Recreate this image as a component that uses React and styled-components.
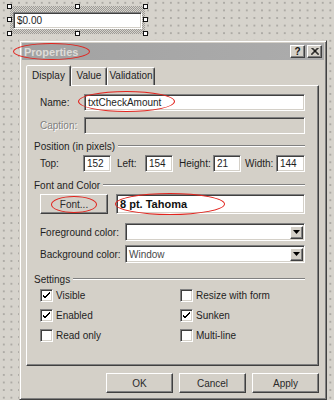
import React from 'react'
import styled, { createGlobalStyle, css } from 'styled-components'

const GlobalStyle = createGlobalStyle`
  html, body {
    margin: 0;
    padding: 0;
  }
  body {
    font-family: "Liberation Sans", Arial, sans-serif;
    font-size: 10px;
    color: #1e1e1e;
  }
  * {
    box-sizing: border-box;
  }
`

const sunken = css`
  border: 1px solid;
  border-color: #808080 #ffffff #ffffff #808080;
  box-shadow: inset 1px 1px 0 #404040, inset -1px -1px 0 #d4d0c8;
`
const raised = css`
  border: 1px solid;
  border-color: #ffffff #404040 #404040 #ffffff;
  box-shadow: inset -1px -1px 0 #808080;
  background: #d4d0c8;
`

const Canvas = styled.div`
  width: 334px;
  height: 400px;
  overflow: hidden;
  padding-top: 6px;
  background-color: #d6d3cc;
  background-image: radial-gradient(circle, #8e8c88 0.5px, transparent 0.9px);
  background-size: 7.6px 7.6px;
  background-position: 0 -1px;
`

// selected control on the form designer
const Selection = styled.div`
  position: relative;
  margin-left: 10px;
  width: 135px;
  height: 28px;
  padding: 6px 3px 5px 3px;
  background: repeating-conic-gradient(#9c9a96 0 25%, #d6d3cc 0 50%) 0 0 / 2px 2px;
`
const Handle = styled.span`
  position: absolute;
  left: ${(p) => p.$x}px;
  top: ${(p) => p.$y}px;
  width: 5px;
  height: 5px;
  background: #fff;
  border: 1px solid #111;
`
const DesignTextBox = styled.div`
  ${sunken};
  height: 17px;
  background: #fff;
  padding: 2px 0 0 3px;
  font-size: 10px;
`

const Dialog = styled.div`
  margin: 6px 0 0 19px;
  width: 308px;
  height: 360px;
  padding: 2px;
  background: #d4d0c8;
  border: 1px solid;
  border-color: #d4d0c8 #404040 #404040 #d4d0c8;
  box-shadow: inset 1px 1px 0 #fff, inset -1px -1px 0 #808080;
`
const TitleBar = styled.div`
  position: relative;
  height: 17px;
  display: flex;
  align-items: center;
  padding: 0 2px 0 2px;
  background: linear-gradient(90deg, #a2a2a2, #acacac);
`
const TitleText = styled.div`
  flex: 1;
  font-size: 11px;
  font-weight: bold;
  color: #dedcd8;
`
const TitleButtons = styled.div`
  display: flex;
  gap: 2px;
`
const TitleButton = styled.div`
  ${raised};
  width: 15px;
  height: 13px;
  display: flex;
  align-items: center;
  justify-content: center;
  font-size: 10px;
  font-weight: bold;
  color: #111;
`

const Body = styled.div`
  padding: 4px 5px 0 4px;
`
const TabRow = styled.div`
  display: flex;
  align-items: flex-end;
  height: 21px;
  position: relative;
  z-index: 1;
`
const Tab = styled.div`
  width: ${(p) => p.$w}px;
  height: ${(p) => (p.$active ? 21 : 18)}px;
  padding-top: ${(p) => (p.$active ? 4 : 2)}px;
  text-align: center;
  font-size: 10px;
  background: #d4d0c8;
  border: 1px solid;
  border-bottom: none;
  border-color: #ffffff #404040 transparent #ffffff;
  box-shadow: inset -1px 0 0 #808080;
  border-radius: 2px 2px 0 0;
  margin-bottom: ${(p) => (p.$active ? -1 : 0)}px;
`
const Panel = styled.div`
  ${raised};
  height: 281px;
  padding: 0 13px 0 7px;
  display: flex;
  flex-direction: column;
`
const Header = styled.div`
  display: flex;
  align-items: center;
  height: 12px;
  margin-top: ${(p) => p.$mt}px;
  font-size: 10px;
  &::after {
    content: '';
    flex: 1;
    margin-left: 3px;
    border-top: 1px solid #808080;
    border-bottom: 1px solid #fff;
  }
`
const Row = styled.div`
  display: flex;
  align-items: center;
  margin-top: ${(p) => p.$mt}px;
  padding-left: 6px;
`
const Label = styled.div`
  width: ${(p) => p.$w}px;
  flex-shrink: 0;
  margin-left: ${(p) => p.$ml || 0}px;
  color: ${(p) => (p.$disabled ? '#808080' : '#1e1e1e')};
  text-shadow: ${(p) => (p.$disabled ? '1px 1px 0 #fff' : 'none')};
`
const Field = styled.div`
  ${sunken};
  position: relative;
  height: ${(p) => p.$h || 17}px;
  width: ${(p) => (p.$w ? `${p.$w}px` : 'auto')};
  flex: ${(p) => (p.$w ? '0 0 auto' : '1')};
  background: ${(p) => (p.$disabled ? '#d4d0c8' : '#fff')};
  display: flex;
  align-items: center;
  padding-left: 3px;
  font-size: ${(p) => (p.$bold ? 11 : 10)}px;
  font-weight: ${(p) => (p.$bold ? 'bold' : 'normal')};
  color: ${(p) => p.$color || '#1e1e1e'};
  margin-left: ${(p) => p.$ml || 0}px;
`
const DropButton = styled.div`
  ${raised};
  margin-left: auto;
  margin-right: 1px;
  width: 13px;
  height: 13px;
  display: flex;
  align-items: center;
  justify-content: center;
`
const PushButton = styled.div`
  ${raised};
  position: relative;
  width: ${(p) => p.$w}px;
  height: 20px;
  display: flex;
  align-items: center;
  justify-content: center;
  font-size: 10px;
  color: #2a2a2a;
  flex-shrink: 0;
`
const Checks = styled.div`
  display: grid;
  grid-template-columns: 140px 1fr;
  row-gap: 7px;
  margin-top: 4px;
  padding-left: 6px;
`
const CheckItem = styled.div`
  display: flex;
  align-items: center;
  gap: 3px;
  height: 13px;
`
const Box = styled.div`
  ${sunken};
  width: 13px;
  height: 13px;
  background: #fff;
  display: flex;
  align-items: center;
  justify-content: center;
`
const Footer = styled.div`
  display: flex;
  justify-content: flex-end;
  gap: 6px;
  margin-top: 7px;
`
const Ring = styled.span`
  position: absolute;
  left: ${(p) => p.$l}px;
  top: ${(p) => p.$t}px;
  width: ${(p) => p.$w}px;
  height: ${(p) => p.$h}px;
  border: 1.5px solid #e2231d;
  border-radius: 50%;
  pointer-events: none;
`

function Check({ checked, children }) {
  return (
    <CheckItem>
      <Box>
        {checked && (
          <svg width="7" height="7" viewBox="0 0 7 7">
            <path d="M0 3 L2 5 L7 0 M0 4 L2 6 L7 1" stroke="#000" strokeWidth="1" fill="none" />
          </svg>
        )}
      </Box>
      {children}
    </CheckItem>
  )
}

function Combo({ value, mt, label }) {
  return (
    <Row $mt={mt}>
      <Label $w={85}>{label}</Label>
      <Field $h={18} $color="#4a4a4a">
        {value}
        <DropButton>
          <svg width="7" height="4" viewBox="0 0 7 4">
            <path d="M0 0 H7 L3.5 4 Z" fill="#000" />
          </svg>
        </DropButton>
      </Field>
    </Row>
  )
}

export default function App() {
  return (
    <Canvas>
      <GlobalStyle />
      <Selection>
        <DesignTextBox>$0.00</DesignTextBox>
        <Handle $x={-3} $y={-2} />
        <Handle $x={65} $y={-2} />
        <Handle $x={133} $y={-2} />
        <Handle $x={-3} $y={11} />
        <Handle $x={133} $y={11} />
        <Handle $x={-3} $y={25} />
        <Handle $x={65} $y={25} />
        <Handle $x={133} $y={25} />
      </Selection>

      <Dialog>
        <TitleBar>
          <TitleText>Properties</TitleText>
          <TitleButtons>
            <TitleButton>?</TitleButton>
            <TitleButton>
              <svg width="8" height="7" viewBox="0 0 8 7">
                <path d="M0.5 0 L7.5 7 M1.5 0 L8 6.5 M7.5 0 L0.5 7 M6.5 0 L0 6.5" stroke="#000" strokeWidth="1" />
              </svg>
            </TitleButton>
          </TitleButtons>
          <Ring $l={-9} $t={0} $w={77} $h={17} />
        </TitleBar>

        <Body>
          <TabRow>
            <Tab $w={45} $active>Display</Tab>
            <Tab $w={36}>Value</Tab>
            <Tab $w={48}>Validation</Tab>
          </TabRow>
          <Panel>
            <Row $mt={8}>
              <Label $w={44}>Name:</Label>
              <Field>
                txtCheckAmount
                <Ring $l={-7} $t={-4} $w={97} $h={21} />
              </Field>
            </Row>
            <Row $mt={6}>
              <Label $w={44} $disabled>Caption:</Label>
              <Field $disabled />
            </Row>

            <Header $mt={6}>Position (in pixels)</Header>
            <Row $mt={3}>
              <Label $w={43}>Top:</Label>
              <Field $w={28}>152</Field>
              <Label $w={28} $ml={6}>Left:</Label>
              <Field $w={28}>154</Field>
              <Label $w={34} $ml={6}>Height:</Label>
              <Field $w={28}>21</Field>
              <Label $w={31} $ml={4}>Width:</Label>
              <Field>144</Field>
            </Row>

            <Header $mt={7}>Font and Color</Header>
            <Row $mt={3}>
              <PushButton $w={68}>
                Font...
                <Ring $l={10} $t={1} $w={46} $h={17} />
              </PushButton>
              <Field $h={20} $bold $ml={8} $color="#111">
                8 pt. Tahoma
                <Ring $l={-2} $t={-2} $w={110} $h={22} />
              </Field>
            </Row>
            <Combo label="Foreground color:" mt={9} value="" />
            <Combo label="Background color:" mt={4} value="Window" />

            <Header $mt={10}>Settings</Header>
            <Checks>
              <Check checked>Visible</Check>
              <Check>Resize with form</Check>
              <Check checked>Enabled</Check>
              <Check checked>Sunken</Check>
              <Check>Read only</Check>
              <Check>Multi-line</Check>
            </Checks>
          </Panel>
          <Footer>
            <PushButton $w={67}>OK</PushButton>
            <PushButton $w={67}>Cancel</PushButton>
            <PushButton $w={67}>Apply</PushButton>
          </Footer>
        </Body>
      </Dialog>
    </Canvas>
  )
}
